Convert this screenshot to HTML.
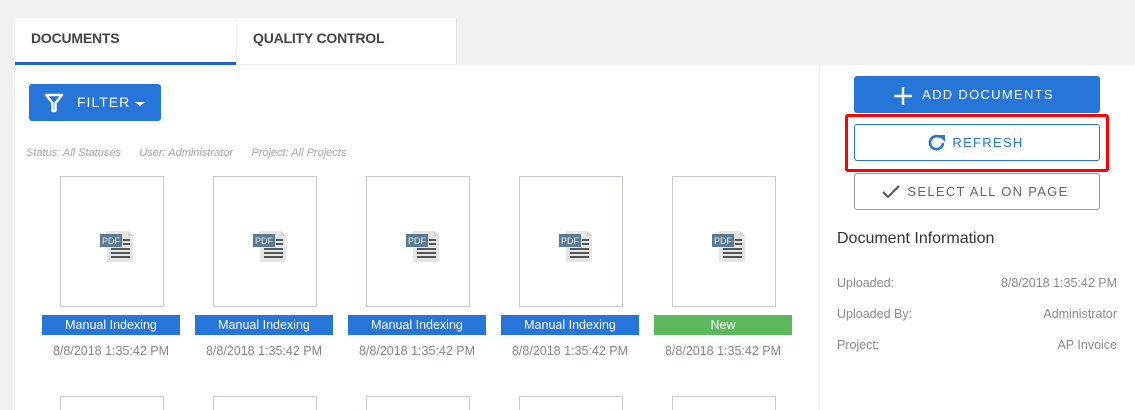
<!DOCTYPE html>
<html><head><style>
*{margin:0;padding:0;box-sizing:border-box}
html,body{width:1135px;height:410px;overflow:hidden}
body{background:#f0f1f1;font-family:"Liberation Sans",sans-serif}
#w{position:relative;width:1135px;height:410px;overflow:hidden}
.a{position:absolute}
.tab{position:absolute;top:18px;height:47px;background:#fff;font-size:14px;font-weight:bold;color:#444;padding:12px 0 0 16px;letter-spacing:-0.2px}
.thumb{position:absolute;width:104px;height:131px;border:1px solid #c8cacf;background:#fff}
.lbl{position:absolute;width:138px;height:20px;color:#fff;font-size:12.5px;text-align:center;line-height:20px}
.dt{position:absolute;width:138px;text-align:center;font-size:12.5px;color:#8a8480}
.btn{position:absolute;left:854px;width:246px;height:37px;border-radius:3px;font-size:13px;letter-spacing:1.3px;text-align:center;line-height:37px}
.row{position:absolute;left:837px;width:280px;font-size:12.5px;color:#8a8a8a}
.row span{float:right}
</style></head><body><div id="w">
<div class="a" style="left:15px;top:65px;width:1120px;height:345px;background:#fff"></div>
<div class="a" style="left:819px;top:66px;width:1px;height:344px;background:#ececec"></div>
<div class="tab" style="left:15px;width:221px">DOCUMENTS</div>
<div class="a" style="left:15px;top:62px;width:221px;height:3px;background:#1e66cf"></div>
<div class="tab" style="left:236px;width:221px;border-left:1px solid #eee;border-right:1px solid #e6e6e6;border-bottom:1px solid #eee">QUALITY CONTROL</div>
<div class="a" style="left:29px;top:84px;width:132px;height:37px;background:#2675d9;border-radius:3px;color:#fff;font-size:14px;letter-spacing:1px;line-height:37px;padding-left:48px">FILTER</div>
<svg class="a" style="left:44px;top:93px" width="20" height="20" viewBox="0 0 20 20"><path d="M2 2H18L11.5 10V18H8.5V10Z" fill="none" stroke="#fff" stroke-width="2.4" stroke-linejoin="round"/></svg>
<svg class="a" style="left:134px;top:101px" width="12" height="6"><path d="M1 1H11L6 5Z" fill="#fff"/></svg>
<div class="a" style="left:26px;top:147px;font-size:11px;font-style:italic;color:#a6a6a6">Status: All Statuses &nbsp;&nbsp;&nbsp;&nbsp; User: Administrator &nbsp;&nbsp;&nbsp;&nbsp; Project: All Projects</div>

<div id="cards"></div>
<script>
var xs=[60,213,366,519,672],h='';
xs.forEach(function(x,i){
h+='<div class="thumb" style="left:'+x+'px;top:176px"></div>';
h+='<svg class="a" style="left:'+(x+40)+'px;top:231px" width="34" height="32"><path d="M7 0H28L33 5V31H7Z" fill="#e6e6e6"/><path d="M28 0V5H33" fill="#d0d0d0"/><rect x="0" y="3" width="22" height="13" fill="#5b7a93"/><text x="2" y="13" font-size="9" fill="#e8eef3" font-family="Liberation Sans">PDF</text><g fill="#555"><rect x="23" y="8" width="7" height="2"/><rect x="23" y="12" width="7" height="2"/><rect x="11" y="17" width="19" height="2"/><rect x="11" y="21" width="19" height="2"/><rect x="11" y="25" width="19" height="2"/></g></svg>';
h+='<div class="lbl" style="left:'+(x-18)+'px;top:315px;background:'+(i==4?'#5cb85c':'#2675d9')+'">'+(i==4?'New':'Manual Indexing')+'</div>';
h+='<div class="dt" style="left:'+(x-18)+'px;top:344px">8/8/2018 1:35:42 PM</div>';
h+='<div class="a" style="left:'+x+'px;top:396px;width:104px;height:14px;border:1px solid #c8cacf;border-bottom:none"></div>';
});
document.getElementById('cards').innerHTML=h;
</script>

<div class="btn" style="top:76px;background:#2675d9;color:#fff;padding-left:22px">ADD DOCUMENTS</div>
<svg class="a" style="left:893px;top:86px" width="20" height="20"><path d="M10 1V19M1 10H19" stroke="#fff" stroke-width="2.4"/></svg>
<div class="a" style="left:845px;top:114px;width:264px;height:58px;border:3.5px solid #f00;border-radius:3px"></div>
<div class="btn" style="top:124px;border:1px solid #2675d9;color:#2675d9;padding-left:22px;line-height:35px">REFRESH</div>
<svg class="a" style="left:927px;top:133px" width="20" height="20" viewBox="0 0 20 20"><path d="M16 10A6.5 6.5 0 1 1 13.5 4.5" fill="none" stroke="#2675d9" stroke-width="2.6"/><path d="M11 2H18V9Z" fill="#2675d9"/></svg>
<div class="btn" style="top:173px;border:1px solid #999;color:#666;padding-left:22px;line-height:35px">SELECT ALL ON PAGE</div>
<svg class="a" style="left:881px;top:183px" width="20" height="18"><path d="M2 9L7 14L18 3" fill="none" stroke="#555" stroke-width="2"/></svg>
<div class="a" style="left:837px;top:230px;font-size:16px;color:#333">Document Information</div>
<div class="row" style="top:276px">Uploaded:<span>8/8/2018 1:35:42 PM</span></div>
<div class="row" style="top:307px">Uploaded By:<span>Administrator</span></div>
<div class="row" style="top:338px">Project:<span>AP Invoice</span></div>
</div></body></html>
